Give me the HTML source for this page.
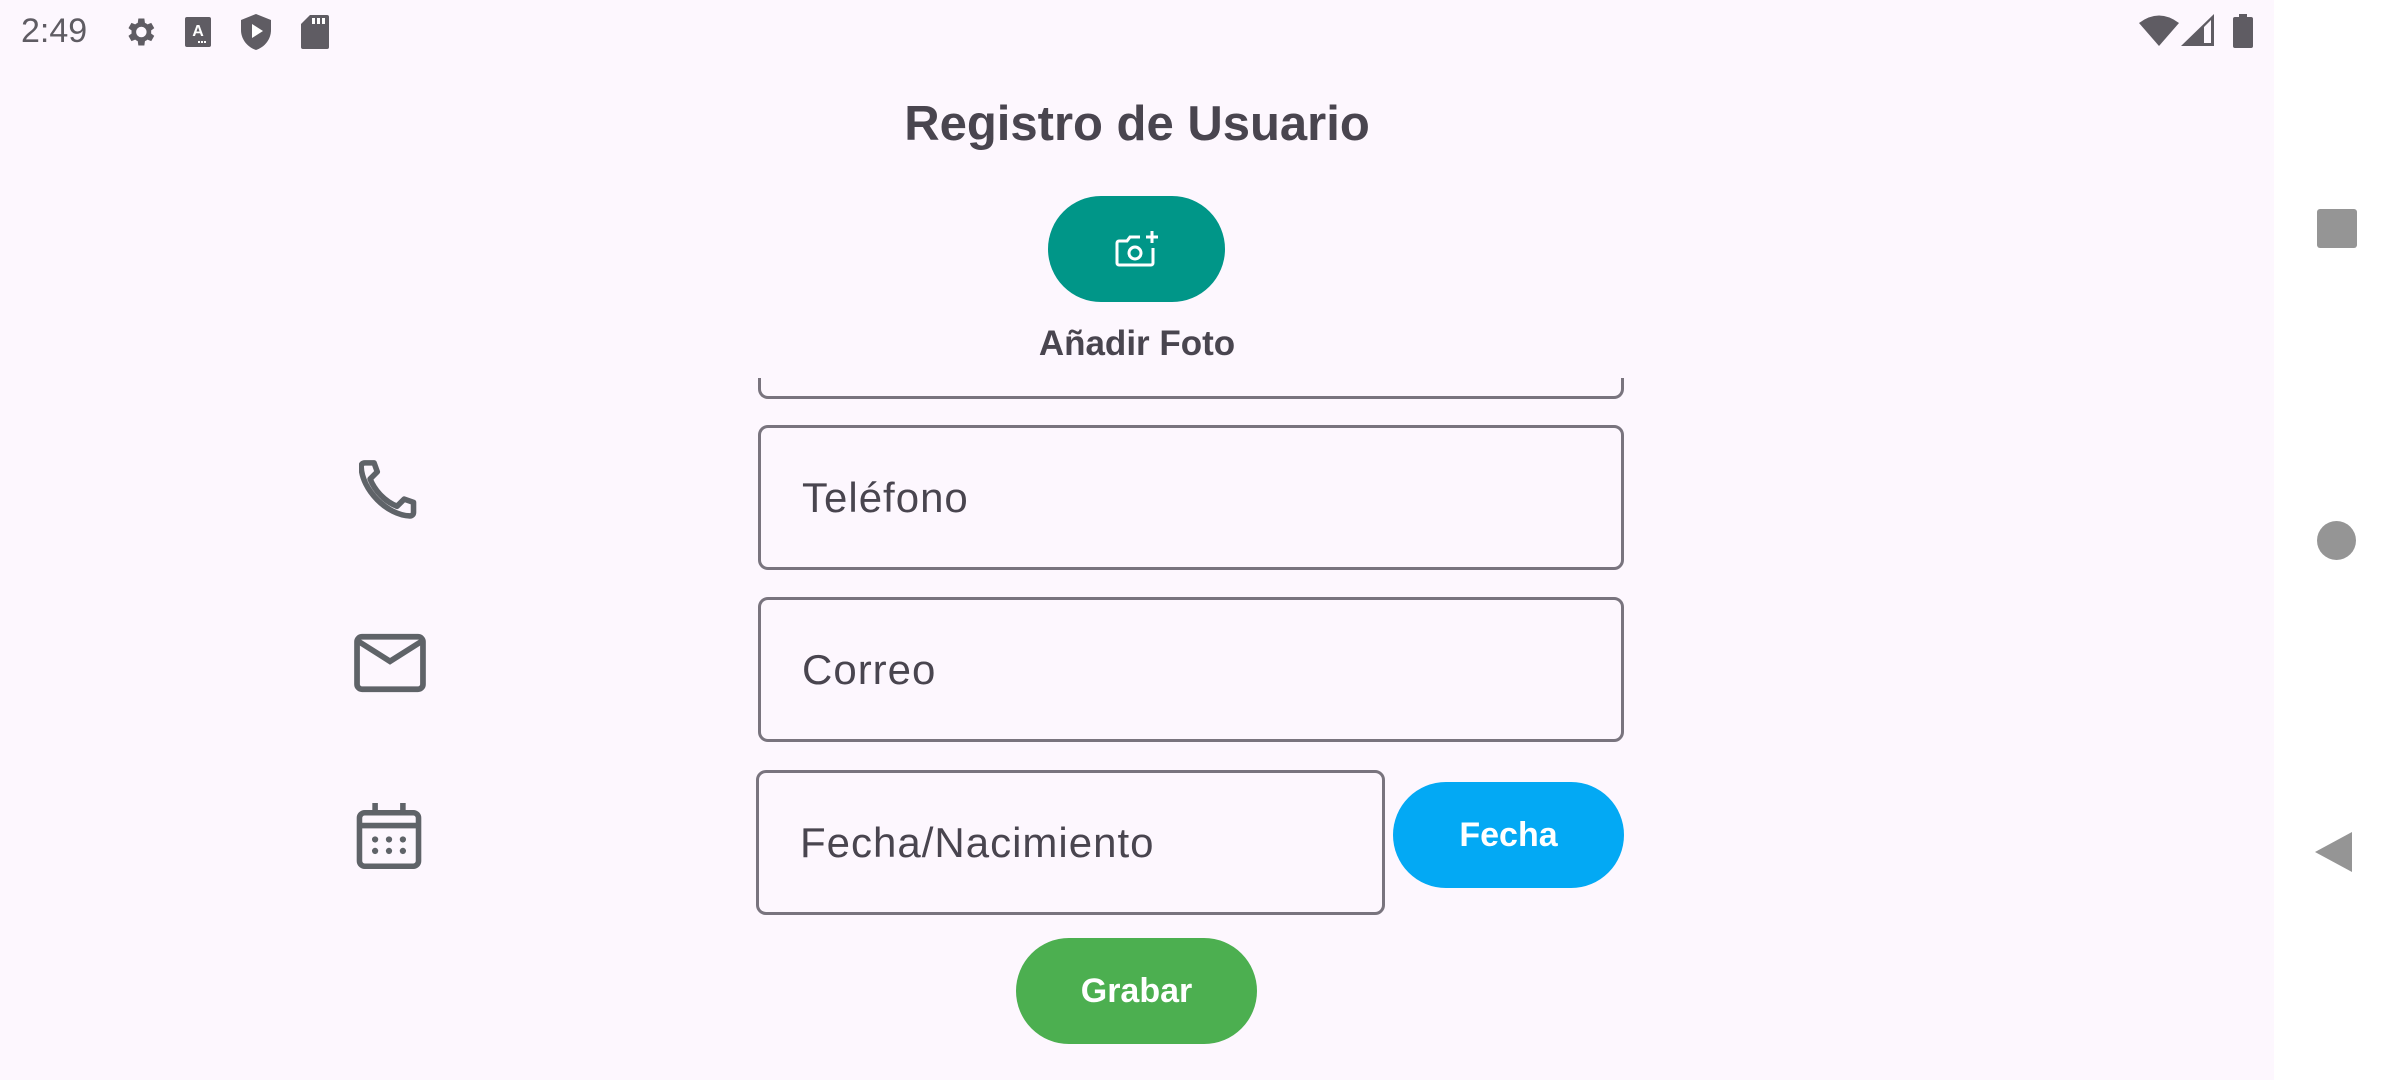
<!DOCTYPE html>
<html><head><meta charset="utf-8"><style>
*{margin:0;padding:0;box-sizing:border-box}
body{width:2400px;height:1080px;background:#fff;position:relative;overflow:hidden;font-family:"Liberation Sans",sans-serif;color:#49454f}
#scr{position:absolute;left:0;top:0;width:2274px;height:1080px;background:#fdf7fe}
.a{position:absolute}
.f{position:absolute;border:3px solid #79747e;border-radius:10px}
.f span{position:absolute;left:41px;top:50%;transform:translateY(-50%);font-size:42px;color:#49454f;letter-spacing:1px}
.btn{position:absolute;border-radius:60px;color:#fff;font-weight:bold;font-size:34px;display:flex;align-items:center;justify-content:center}
</style></head><body>
<div id="scr">
<div class="a" style="left:21px;top:12px;font-size:34px;color:#5f5c63">2:49</div>
<svg class="a" style="left:122px;top:14px" width="36" height="36" viewBox="0 0 24 24"><path fill="#5f5c63" d="M19.4 13a7.5 7.5 0 000-2l2.1-1.6-2-3.5-2.5 1a7 7 0 00-1.7-1L14.9 3h-4l-.4 2.9a7 7 0 00-1.7 1l-2.5-1-2 3.5L6.4 11a7.5 7.5 0 000 2l-2.1 1.6 2 3.5 2.5-1a7 7 0 001.7 1l.4 2.9h4l.4-2.9a7 7 0 001.7-1l2.5 1 2-3.5zM12.9 15.5a3.5 3.5 0 110-7 3.5 3.5 0 010 7z"/></svg>
<svg class="a" style="left:185px;top:17px" width="26" height="30" viewBox="0 0 26 30"><rect width="26" height="30" rx="2" fill="#5f5c63"/><text x="13" y="19" font-size="16" font-weight="bold" fill="#fff" text-anchor="middle" font-family="Liberation Sans">A</text><rect x="13" y="24" width="2" height="2" fill="#fff"/><rect x="16" y="24" width="2" height="2" fill="#fff"/><rect x="19" y="24" width="2" height="2" fill="#fff"/></svg>
<svg class="a" style="left:241px;top:14px" width="30" height="36" viewBox="0 0 30 36"><path fill="#5f5c63" d="M15 0L0 6v10c0 9 6 17 15 20 9-3 15-11 15-20V6z"/><path fill="#fff" d="M11 10v14l11-7z"/></svg>
<svg class="a" style="left:301px;top:15px" width="28" height="34" viewBox="0 0 28 34"><path fill="#5f5c63" d="M9 0h17a2 2 0 012 2v30a2 2 0 01-2 2H2a2 2 0 01-2-2V9z"/><rect x="11" y="3" width="3" height="6" fill="#fff"/><rect x="16" y="3" width="3" height="6" fill="#fff"/><rect x="21" y="3" width="3" height="6" fill="#fff"/></svg>
<svg class="a" style="left:2139px;top:14px" width="40" height="32" viewBox="0 0 40 32"><path fill="#5f5c63" d="M0 9Q20-6 40 9L20 32z"/></svg>
<svg class="a" style="left:2181px;top:14px" width="34" height="32" viewBox="0 0 34 32"><path fill="#5f5c63" d="M0 32L33 0v32z"/><path fill="#fdf7fe" d="M23 13v16h7V6z"/></svg>
<svg class="a" style="left:2233px;top:14px" width="20" height="34" viewBox="0 0 20 34"><rect y="3" width="20" height="31" rx="2" fill="#5f5c63"/><rect x="6" width="8" height="4" fill="#5f5c63"/></svg>
<div class="a" style="left:0;width:2274px;top:96px;text-align:center;font-size:49px;font-weight:bold;color:#49454f">Registro de Usuario</div>
<div class="btn" style="left:1048px;top:196px;width:177px;height:106px;background:#009688">
<svg width="44" height="36" viewBox="0 0 44 36"><path fill="none" stroke="#fff" stroke-width="3" d="M25 6H15l-3 4H4a2 2 0 00-2 2v20a2 2 0 002 2h32a2 2 0 002-2V17"/><circle cx="20" cy="22" r="6" fill="none" stroke="#fff" stroke-width="3"/><path stroke="#fff" stroke-width="3" d="M37 0v12M31 6h12"/></svg></div>
<div class="a" style="left:0;width:2274px;top:324px;text-align:center;font-size:35px;font-weight:bold;color:#49454f">Añadir Foto</div>
<div class="f" style="left:758px;top:378px;width:866px;height:21px;border-top:none;border-radius:0 0 10px 10px"></div>
<div class="f" style="left:758px;top:425px;width:866px;height:145px"><span>Teléfono</span></div>
<div class="f" style="left:758px;top:597px;width:866px;height:145px"><span>Correo</span></div>
<div class="f" style="left:756px;top:770px;width:629px;height:145px"><span>Fecha/Nacimiento</span></div>
<div class="btn" style="left:1393px;top:782px;width:231px;height:106px;background:#03a9f4">Fecha</div>
<div class="btn" style="left:1016px;top:938px;width:241px;height:106px;background:#4caf50">Grabar</div>
<svg class="a" style="left:359px;top:460px" width="66" height="66" viewBox="2.2 1.9 18.4 18.4"><path fill="none" stroke="#5f6368" stroke-width="1.55" stroke-linejoin="round" d="M3.8 2.7h2.6l.9 2.5-2 2c1.4 3.4 4.2 6.3 7.5 7.6l2-2 2.6.9v2.8c0 .6-.4 1-1 1C10 17.3 3 10.2 2.8 3.7c0-.6.4-1 1-1z"/></svg>
<svg class="a" style="left:354px;top:627px" width="72" height="72" viewBox="1.3 1.3 21.4 21.4"><rect x="2.2" y="4.2" width="19.6" height="15.6" rx="1.5" fill="none" stroke="#5f6368" stroke-width="1.7"/><path fill="none" stroke="#5f6368" stroke-width="1.7" d="M2.5 5.5l9.5 6 9.5-6"/></svg>
<svg class="a" style="left:356px;top:803px" width="66" height="66" viewBox="2.5 1 19 19"><rect x="3.5" y="3.8" width="17" height="15.4" rx="1.5" fill="none" stroke="#5f6368" stroke-width="1.6"/><path stroke="#5f6368" stroke-width="1.6" d="M3.5 7.5h17M8 1v3.5M16 1v3.5"/><g fill="#5f6368"><circle cx="8" cy="11.5" r="0.9"/><circle cx="12" cy="11.5" r="0.9"/><circle cx="16" cy="11.5" r="0.9"/><circle cx="8" cy="14.8" r="0.9"/><circle cx="12" cy="14.8" r="0.9"/><circle cx="16" cy="14.8" r="0.9"/></g></svg>
</div>
<div class="a" style="left:2317px;top:209px;width:40px;height:39px;background:#959595;border-radius:3px"></div>
<div class="a" style="left:2317px;top:521px;width:39px;height:39px;background:#959595;border-radius:50%"></div>
<svg class="a" style="left:2315px;top:831px" width="38" height="42" viewBox="0 0 38 42"><path fill="#959595" d="M0 21L37 1v40z"/></svg>
</body></html>
